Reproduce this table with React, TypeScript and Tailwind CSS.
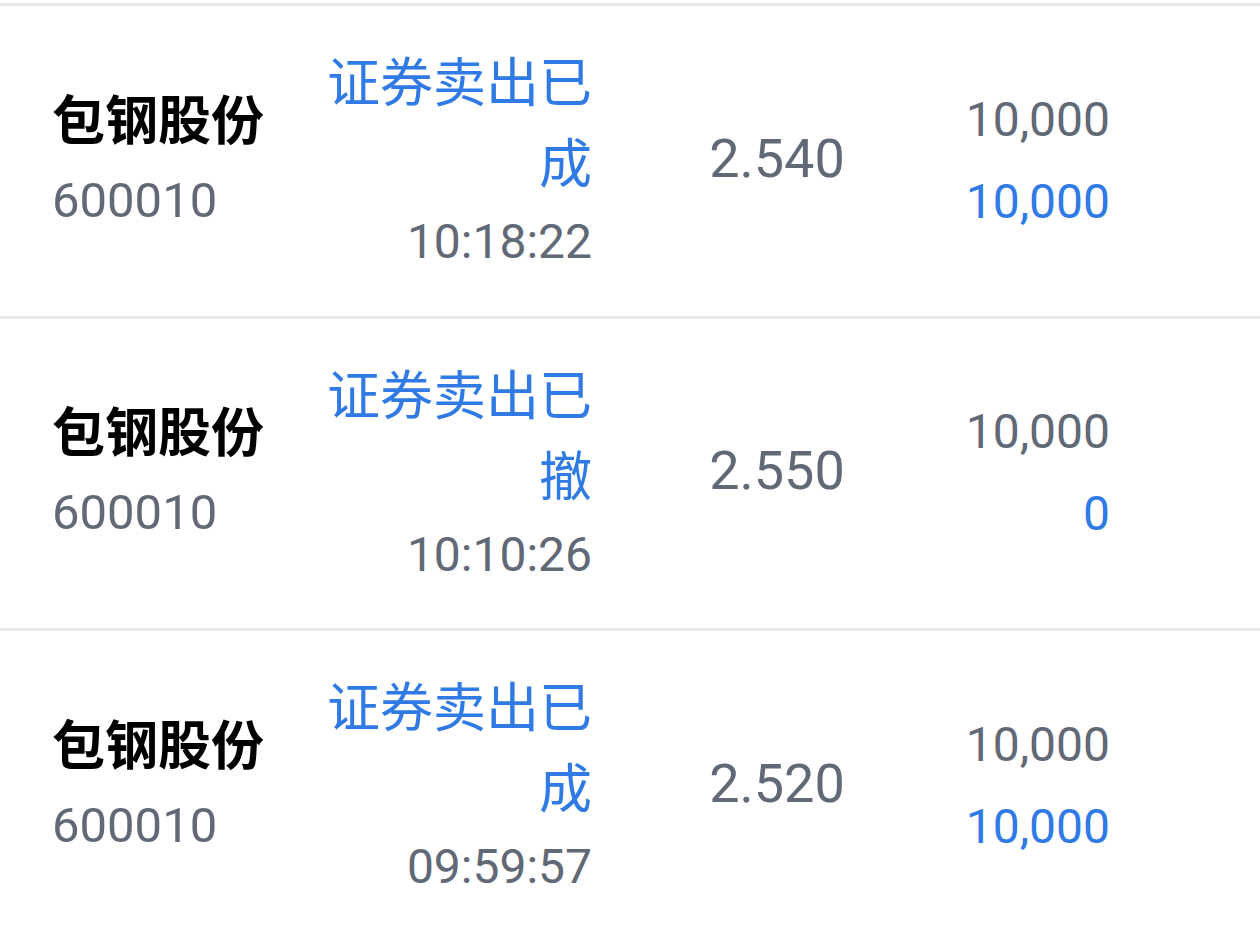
import React from "react";

type Row = {
  name: string;
  code: string;
  status: string;
  time: string;
  price: string;
  qty: string;
  done: string;
};

const rows: Row[] = [
  { name: "包钢股份", code: "600010", status: "证券卖出已成", time: "10:18:22", price: "2.540", qty: "10,000", done: "10,000" },
  { name: "包钢股份", code: "600010", status: "证券卖出已撤", time: "10:10:26", price: "2.550", qty: "10,000", done: "0" },
  { name: "包钢股份", code: "600010", status: "证券卖出已成", time: "09:59:57", price: "2.520", qty: "10,000", done: "10,000" },
];

const num = "font-['Roboto','Noto_Sans_CJK_SC',sans-serif]";
const cjk = "font-['Noto_Sans_CJK_SC',sans-serif]";

export default function App() {
  return (
    <div className="w-[1260px] h-[927px] bg-white pt-[3px] overflow-hidden">
      {rows.map((r, i) => (
        <div key={i} className="border-t-[3px] border-[#e6e8ec] h-[312.5px] flex items-center pl-[52px]">
          <div className="w-[260px] flex flex-col">
            <div className={`${cjk} font-bold text-[53px] leading-[84px] text-black -mt-[4px]`}>{r.name}</div>
            <div className={`${num} text-[49px] leading-[84px] text-[#616876]`}>{r.code}</div>
          </div>
          <div className="w-[280px] flex flex-col items-end text-right">
            <div className={`${cjk} text-[53px] leading-[81px] text-[#2f7ae5] w-[280px]`}>{r.status}</div>
            <div className={`${num} text-[48px] leading-[81px] text-[#616876] whitespace-nowrap`}>{r.time}</div>
          </div>
          <div className={`w-[370px] text-center ${num} text-[54px] leading-[82px] text-[#616876] -mt-[4px]`}>{r.price}</div>
          <div className={`w-[148px] flex flex-col items-end ${num} text-[48px] leading-[82px] whitespace-nowrap`}>
            <div className="text-[#616876]">{r.qty}</div>
            <div className="text-[#2f7ae5]">{r.done}</div>
          </div>
        </div>
      ))}
    </div>
  );
}
